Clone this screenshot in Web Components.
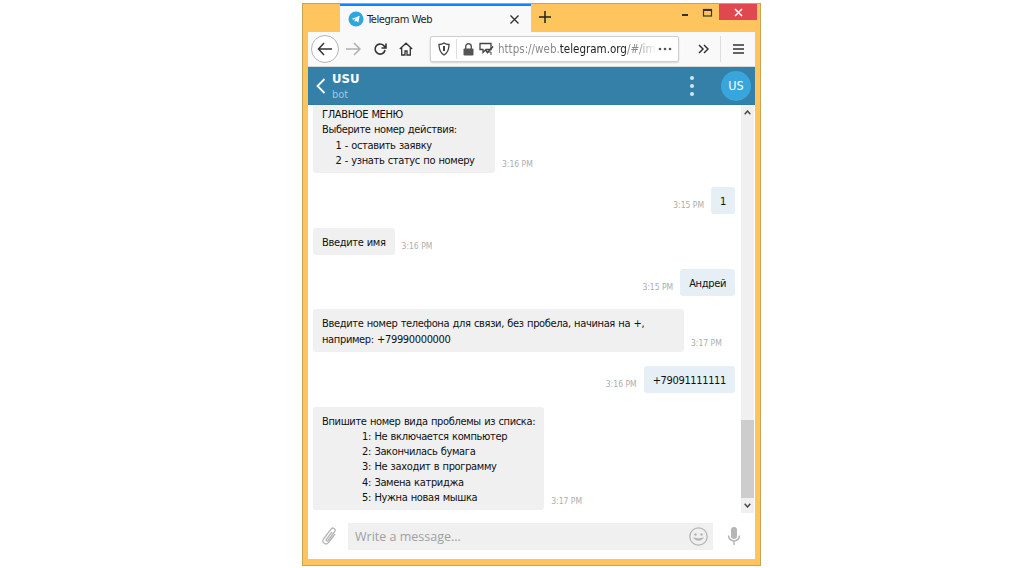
<!DOCTYPE html>
<html>
<head>
<meta charset="utf-8">
<title>Telegram Web</title>
<style>
  html, body { margin: 0; height: 100%; background: #fff; }
  body { font-family: "DejaVu Sans Condensed", "DejaVu Sans", sans-serif; overflow: hidden; }
</style>
</head>
<body>
<browser-window>
  <browser-tabs slot="tabs"></browser-tabs>
  <browser-toolbar slot="toolbar"></browser-toolbar>
  <tg-header slot="page"></tg-header>
  <chat-area slot="page">
    <chat-message time="3:16 PM" style="--bubble-width: 182px">ГЛАВНОЕ МЕНЮ
Выберите номер действия:
    1 - оставить заявку
    2 - узнать статус по номеру</chat-message>
    <chat-message out time="3:15 PM">1</chat-message>
    <chat-message time="3:16 PM">Введите имя</chat-message>
    <chat-message out time="3:15 PM">Андрей</chat-message>
    <chat-message time="3:17 PM" style="--bubble-width: 371px">Введите номер телефона для связи, без пробела, начиная на +,
например: +79990000000</chat-message>
    <chat-message out time="3:16 PM">+79091111111</chat-message>
    <chat-message time="3:17 PM">Впишите номер вида проблемы из списка:
            1: Не включается компьютер
            2: Закончилась бумага
            3: Не заходит в программу
            4: Замена катриджа
            5: Нужна новая мышка</chat-message>
  </chat-area>
  <tg-composer slot="page"></tg-composer>
</browser-window>

<script>
// Define the elements
customElements.define('browser-window', class extends HTMLElement {
  constructor() {
    super();
    this.attachShadow({ mode: 'open' }).innerHTML = `
      <style>
        :host { display: block; width: 459px; height: 563px; margin: 3px 0 0 302px; box-sizing: border-box;
          border: 1px solid #c8a353; background: #fec55f; padding: 0 5px 6px 5px; }
        #page { display: flex; flex-direction: column; height: 492px; background: #fff; }
      </style>
      <slot name="tabs"></slot>
      <slot name="toolbar"></slot>
      <div id="page"><slot name="page"></slot></div>
    `;
  }
});

customElements.define('browser-tabs', class extends HTMLElement {
  constructor() {
    super();
    this.attachShadow({ mode: 'open' }).innerHTML = `
      <style>
        :host { display: flex; height: 28px; margin-right: -2px; font: 11px "DejaVu Sans Condensed", "DejaVu Sans", sans-serif; color: #222; }
        #tab { width: 191px; margin-left: 32px; box-sizing: border-box; border-top: 2px solid #0a84ff; background: #f9f9fa;
          display: flex; align-items: center; padding: 0 11px 0 8px; gap: 3px; }
        #tab span { flex: 1; letter-spacing: -.4px; }
        #plus { margin: 6px 0 0 7px; width: 14px; height: 14px; }
        #controls { margin-left: auto; display: flex; align-items: flex-start; }
        #controls svg { display: block; }
        #close { width: 38px; height: 16px; background: #e0484f; display: flex; align-items: center; justify-content: center; }
      </style>
      <div id="tab">
        <svg width="16" height="16" viewBox="0 0 16 16"><circle cx="8" cy="8" r="7.5" fill="#2ea6de"/><path d="M3.4 8l8.3-3.3-1.3 6.8-2.3-1.7-1.2 1.2-.4-2.2 3.4-2.6-4.3 2.3z" fill="#fff"/></svg>
        <span>Telegram Web</span>
        <svg width="11" height="11" viewBox="0 0 11 11"><path d="M1.5 1.5l8 8M9.5 1.5l-8 8" stroke="#333" stroke-width="1.4"/></svg>
      </div>
      <svg id="plus" viewBox="0 0 14 14"><path d="M7 1v12M1 7h12" stroke="#222" stroke-width="1.5"/></svg>
      <div id="controls">
        <svg width="38" height="16" viewBox="0 0 38 16"><rect x="1" y="10" width="6" height="2" fill="#333"/><rect x="22.500" y="5.500" width="8" height="6.500" fill="none" stroke="#333" stroke-width="1.200"/><rect x="22" y="5" width="9" height="2" fill="#333"/></svg>
        <div id="close"><svg width="9" height="9" viewBox="0 0 9 9"><path d="M1 1l7 7M8 1l-7 7" stroke="#fff" stroke-width="1.500"/></svg></div>
      </div>
    `;
  }
});

customElements.define('browser-toolbar', class extends HTMLElement {
  constructor() {
    super();
    this.attachShadow({ mode: 'open' }).innerHTML = `
      <style>
        :host { display: flex; align-items: center; height: 35px; box-sizing: border-box; background: #f9f9fa;
          border-bottom: 1px solid #d8d8d8; padding: 0 0 0 3px; color: #3a3a3a; }
        svg { display: block; flex: none; }
        #back { width: 28px; height: 28px; box-sizing: border-box; border: 1px solid #b5b5b5; border-radius: 50%; background: #fff;
          display: flex; align-items: center; justify-content: center; flex: none; }
        #url { width: 249px; height: 26px; box-sizing: border-box; margin-left: 17px; background: #fff; border: 1px solid #cfcfcf; border-radius: 2px;
          box-shadow: 0 1px 2px rgba(0,0,0,.15); display: flex; align-items: center; padding-left: 7px; flex: none; }
        #addr { font: 11.5px "DejaVu Sans Condensed", "DejaVu Sans", sans-serif; color: #8a8a8a; margin-left: 4px; white-space: nowrap; width: 159px;
          -webkit-mask-image: linear-gradient(to right, #000 88%, transparent); mask-image: linear-gradient(to right, #000 88%, transparent); }
        #addr b { font-weight: normal; color: #222; }
        .sep { width: 1px; height: 20px; background: #dedede; flex: none; }
      </style>
      <div id="back"><svg width="16" height="14" viewBox="0 0 16 14"><path d="M7 1L1.500 7 7 13M1.500 7H15" fill="none" stroke="#333" stroke-width="1.500"/></svg></div>
      <svg style="margin-left:6px" width="16" height="14" viewBox="0 0 16 14"><path d="M9 1l6 6-6 6M15 7H1" fill="none" stroke="#b0b0b0" stroke-width="1.500"/></svg>
      <svg style="margin-left:12px" width="14" height="14" viewBox="0 0 14 14"><path d="M12 8a5 5 0 1 1-1.500-4.600L13 6M13 1.500V6H8.500" fill="none" stroke="#333" stroke-width="1.600"/></svg>
      <svg style="margin-left:12px" width="14" height="14" viewBox="0 0 14 14"><path d="M.8 7L7 1.200 13.200 7M2.700 5.500V13H6V9h2v4h3.300V5.500" fill="none" stroke="#333" stroke-width="1.300"/></svg>
      <div id="url">
        <svg width="12" height="14" viewBox="0 0 12 14"><path d="M1 2.500Q4 2.500 6 1q2 1.500 5 1.500 0 7.500-5 10.500Q1 10 1 2.500z" fill="none" stroke="#444" stroke-width="1.300"/><path d="M6 4v5" stroke="#444" stroke-width="2"/></svg>
        <div class="sep" style="margin-left:6px"></div>
        <svg style="margin-left:6px" width="11" height="13" viewBox="0 0 11 13"><rect x=".5" y="5.500" width="10" height="7" rx="1" fill="#555"/><path d="M2.700 6V3.500a2.800 2.800 0 0 1 5.600 0V6" fill="none" stroke="#555" stroke-width="1.400"/></svg>
        <svg style="margin-left:5px" width="15" height="14" viewBox="0 0 15 14"><path d="M1 1.500h11v6H7l-3 3V7.500H1z" fill="none" stroke="#444" stroke-width="1.300"/><path d="M6.500 8l2 2.500L14 4.500" fill="none" stroke="#444" stroke-width="1.600"/><path d="M9 10h3v3" fill="none" stroke="#444"/></svg>
        <div id="addr">https://web.<b>telegram.org</b>/#/im</div>
        <svg style="margin-left:1px" width="14" height="4" viewBox="0 0 14 4"><circle cx="2" cy="2" r="1.300" fill="#555"/><circle cx="7" cy="2" r="1.300" fill="#555"/><circle cx="12" cy="2" r="1.300" fill="#555"/></svg>
      </div>
      <svg style="margin-left:19px" width="11" height="10" viewBox="0 0 11 10"><path d="M1 1l4 4-4 4M6 1l4 4-4 4" fill="none" stroke="#333" stroke-width="1.500"/></svg>
      <div class="sep" style="margin-left:11px;height:26px"></div>
      <svg style="margin-left:12px" width="11" height="10" viewBox="0 0 11 10"><path d="M0 1h11M0 5h11M0 9h11" stroke="#333" stroke-width="1.300"/></svg>
    `;
  }
});

customElements.define('tg-header', class extends HTMLElement {
  constructor() {
    super();
    this.attachShadow({ mode: 'open' }).innerHTML = `
      <style>
        :host { display: flex; align-items: center; height: 38px; flex: none; box-sizing: border-box; background: #3580a8; border-bottom: 1px solid #2f7ba4; color: #fff;
          padding-left: 8px; font-family: "DejaVu Sans Condensed", "DejaVu Sans", sans-serif; }
        #title { margin-left: 6px; line-height: 16px; padding-top: 3px; }
        #name { font-size: 13px; font-weight: bold; }
        #status { font-size: 11px; color: #9fc6dc; }
        #dots { margin-left: auto; display: block; }
        #avatar { width: 30px; height: 30px; border-radius: 50%; background: #38a6dd; display: flex; align-items: center; justify-content: center;
          font-size: 12.5px; margin: 0 4px 0 27px; }
      </style>
      <svg width="10" height="16" viewBox="0 0 10 16"><path d="M8.500 1L1.500 8l7 7" fill="none" stroke="#fff" stroke-width="1.800"/></svg>
      <div id="title"><div id="name">USU</div><div id="status">bot</div></div>
      <svg id="dots" width="4" height="20" viewBox="0 0 4 20"><circle cx="2" cy="2" r="2" fill="#d5e5ee"/><circle cx="2" cy="10" r="2" fill="#d5e5ee"/><circle cx="2" cy="18" r="2" fill="#d5e5ee"/></svg>
      <div id="avatar">US</div>
    `;
  }
});

customElements.define('chat-area', class extends HTMLElement {
  constructor() {
    super();
    this.attachShadow({ mode: 'open' }).innerHTML = `
      <style>
        :host { display: flex; height: 409px; flex: none; overflow: hidden; }
        #list { flex: 1; min-width: 0; display: flex; flex-direction: column; gap: 13.6px; margin-top: -5px; padding: 0 6px 0 5px; }
        #bar { width: 13px; height: 408px; background: #f0f0f0; margin-right: 1px; display: flex; flex-direction: column; align-items: center; flex: none; }
        #bar svg { display: block; flex: none; margin: 5px 0; }
        #thumb { width: 13px; height: 78px; background: #cdcdcd; margin-top: 300px; }
      </style>
      <div id="list"><slot></slot></div>
      <div id="bar">
        <svg width="7" height="5" viewBox="0 0 7 5"><path d="M.7 4.300L3.500 1l2.800 3.300" fill="none" stroke="#444" stroke-width="1.400"/></svg>
        <div id="thumb"></div>
        <svg width="7" height="5" viewBox="0 0 7 5"><path d="M.7.7L3.500 4 6.300.7" fill="none" stroke="#444" stroke-width="1.400"/></svg>
      </div>
    `;
  }
});

customElements.define('chat-message', class extends HTMLElement {
  constructor() {
    super();
    this.attachShadow({ mode: 'open' }).innerHTML = `
      <style>
        :host { display: flex; align-items: flex-end; gap: 7px; font: 11px/15.3px "DejaVu Sans Condensed", "DejaVu Sans", sans-serif; color: #111;
          letter-spacing: -.35px; word-spacing: .55px; }
        :host([out]) { flex-direction: row-reverse; }
        #bubble { background: #f0f0f0; border-radius: 3px; padding: 7px 9px 5px; white-space: pre-wrap; box-sizing: border-box; min-width: var(--bubble-width, 0); }
        :host([out]) #bubble { background: #e6eff5; }
        #time { font-size: 8.5px; letter-spacing: 0; word-spacing: 0; line-height: 12px; color: #adadad; padding-bottom: 3px; white-space: nowrap; }
      </style>
      <div id="bubble"><slot></slot></div>
      <div id="time"></div>
    `;
    this.shadowRoot.querySelector('#time').textContent = this.getAttribute('time');
  }
});

customElements.define('tg-composer', class extends HTMLElement {
  constructor() {
    super();
    this.attachShadow({ mode: 'open' }).innerHTML = `
      <style>
        :host { display: flex; align-items: center; flex: 1; padding: 0 0 1px 13px; font-family: "Open Sans", sans-serif; }
        svg { display: block; flex: none; }
        #input { width: 365px; height: 27px; margin-left: 10px; box-sizing: border-box; background: #f0f0f0; display: flex; align-items: center; padding: 0 5px 0 7px;
          font-size: 12.5px; color: #a0a0a0; flex: none; }
        #input span { flex: 1; }
      </style>
      <svg width="17" height="20" viewBox="0 0 17 20"><path d="M14 8l-6.500 8.500a3 3 0 0 1-5-3.500L10 3.200a2.200 2.200 0 0 1 3.800 2.300L7 14.500a1 1 0 0 1-1.700-1.200L11 6" fill="none" stroke="#b5b5b5" stroke-width="1.300"/></svg>
      <div id="input">
        <span>Write a message...</span>
        <svg width="19" height="19" viewBox="0 0 19 19"><circle cx="9.500" cy="9.500" r="8.700" fill="none" stroke="#b5b5b5" stroke-width="1.300"/><circle cx="6.500" cy="7.500" r="1.200" fill="#b5b5b5"/><circle cx="12.500" cy="7.500" r="1.200" fill="#b5b5b5"/><path d="M4.700 11q4.800 4.500 9.600 0q-4.800 1.800-9.600 0z" fill="#b5b5b5" stroke="#b5b5b5"/></svg>
      </div>
      <svg style="margin-left:14px" width="14" height="19" viewBox="0 0 14 19"><rect x="4" y="0" width="6" height="12" rx="3" fill="#b5b5b5"/><path d="M1.500 8.500a5.500 5.500 0 0 0 11 0M7 14v4" fill="none" stroke="#b5b5b5" stroke-width="1.500"/></svg>
    `;
  }
});
</script>
</body>
</html>
